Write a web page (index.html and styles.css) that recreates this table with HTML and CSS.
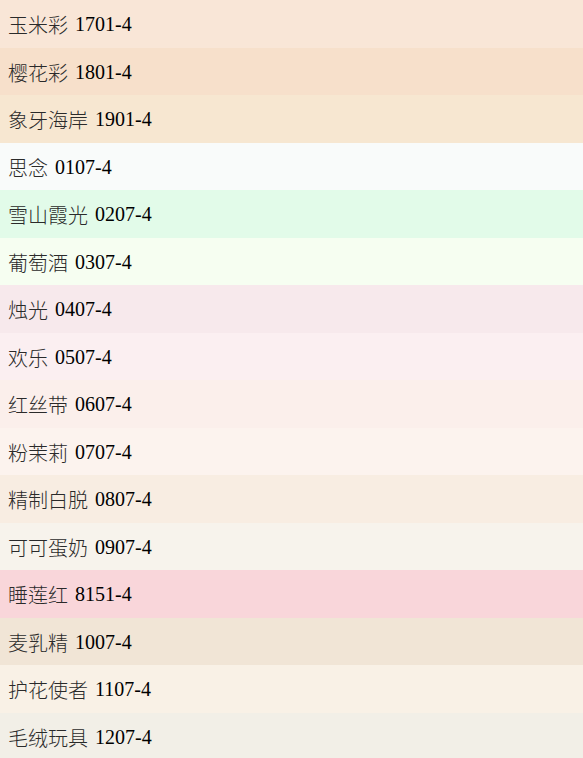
FILE: index.html
```html
<!DOCTYPE html>
<html lang="zh">
<head>
<meta charset="utf-8">
<link rel="stylesheet" href="styles.css">
</head>
<body>
<ul class="list">
  <li class="row c1"><span class="name">玉米彩</span> <span class="code">1701-4</span></li>
  <li class="row c2"><span class="name">樱花彩</span> <span class="code">1801-4</span></li>
  <li class="row c3"><span class="name">象牙海岸</span> <span class="code">1901-4</span></li>
  <li class="row c4"><span class="name">思念</span> <span class="code">0107-4</span></li>
  <li class="row c5"><span class="name">雪山霞光</span> <span class="code">0207-4</span></li>
  <li class="row c6"><span class="name">葡萄酒</span> <span class="code">0307-4</span></li>
  <li class="row c7"><span class="name">烛光</span> <span class="code">0407-4</span></li>
  <li class="row c8"><span class="name">欢乐</span> <span class="code">0507-4</span></li>
  <li class="row c9"><span class="name">红丝带</span> <span class="code">0607-4</span></li>
  <li class="row c10"><span class="name">粉茉莉</span> <span class="code">0707-4</span></li>
  <li class="row c11"><span class="name">精制白脱</span> <span class="code">0807-4</span></li>
  <li class="row c12"><span class="name">可可蛋奶</span> <span class="code">0907-4</span></li>
  <li class="row c13"><span class="name">睡莲红</span> <span class="code">8151-4</span></li>
  <li class="row c14"><span class="name">麦乳精</span> <span class="code">1007-4</span></li>
  <li class="row c15"><span class="name">护花使者</span> <span class="code">1107-4</span></li>
  <li class="row c16"><span class="name">毛绒玩具</span> <span class="code">1207-4</span></li>
</ul>
</body>
</html>
```
FILE: styles.css
```css
html, body {
  margin: 0;
  padding: 0;
  background: #ffffff;
}
.list {
  list-style: none;
  margin: 0;
  padding: 0;
  font-family: "Liberation Serif", "Noto Sans CJK SC", serif;
  font-size: 20px;
  color: #000;
}
.row {
  height: 47.5px;
  box-sizing: border-box;
  display: flex;
  align-items: center;
  gap: 7px;
  padding-left: 8px;
  padding-top: 2px;
}
.name {
  font-weight: 300;
  color: #2a2a2a;
}
.code {
  font-size: 20px;
  color: #000;
}
.c1 { background: #f9e6d7; }
.c2 { background: #f7e0cb; }
.c3 { background: #f7e7d1; }
.c4 { background: #f9fbfa; }
.c5 { background: #e2fbe9; }
.c6 { background: #f6fef1; }
.c7 { background: #f7e9ec; }
.c8 { background: #fbeff1; }
.c9 { background: #fbefeb; }
.c10 { background: #fcf3ee; }
.c11 { background: #f8ede2; }
.c12 { background: #f7f3ec; }
.c13 { background: #f9d6da; }
.c14 { background: #f1e5d6; }
.c15 { background: #f9f1e6; }
.c16 { background: #f2efe7; }
```
